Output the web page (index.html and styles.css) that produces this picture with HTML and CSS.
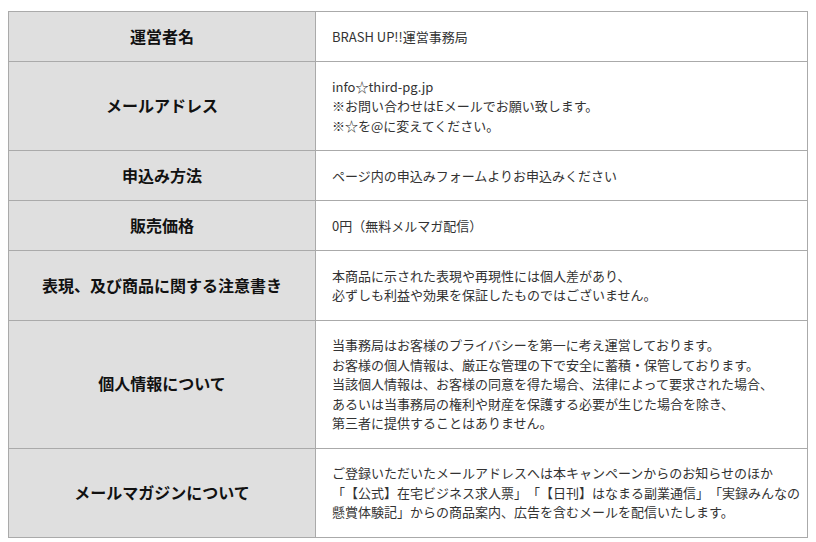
FILE: index.html
```html
<!DOCTYPE html>
<html lang="ja">
<head>
<meta charset="utf-8">
<link rel="stylesheet" href="styles.css">
</head>
<body>
<div class="wrap">
<table class="info">
<tr><th>運営者名</th><td>BRASH UP!!運営事務局</td></tr>
<tr><th>メールアドレス</th><td>info☆third-pg.jp<br>※お問い合わせはEメールでお願い致します。<br>※☆を@に変えてください。</td></tr>
<tr><th>申込み方法</th><td>ページ内の申込みフォームよりお申込みください</td></tr>
<tr><th>販売価格</th><td>0円（無料メルマガ配信）</td></tr>
<tr><th>表現、及び商品に関する注意書き</th><td>本商品に示された表現や再現性には個人差があり、<br>必ずしも利益や効果を保証したものではございません。</td></tr>
<tr><th>個人情報について</th><td>当事務局はお客様のプライバシーを第一に考え運営しております。<br>お客様の個人情報は、厳正な管理の下で安全に蓄積・保管しております。<br>当該個人情報は、お客様の同意を得た場合、法律によって要求された場合、<br>あるいは当事務局の権利や財産を保護する必要が生じた場合を除き、<br>第三者に提供することはありません。</td></tr>
<tr><th>メールマガジンについて</th><td>ご登録いただいたメールアドレスへは本キャンペーンからのお知らせのほか<br>「【公式】在宅ビジネス求人票」「【日刊】はなまる副業通信」「実録みんなの<br>懸賞体験記」からの商品案内、広告を含むメールを配信いたします。</td></tr>
</table>
</div>
</body>
</html>
```
FILE: styles.css
```css
html, body {
  margin: 0;
  padding: 0;
  background: #fff;
}
.wrap {
  padding: 11px 8px;
}
.info {
  width: 800px;
  table-layout: fixed;
  border-collapse: collapse;
  font-family: "Noto Sans CJK JP", "Noto Sans", sans-serif;
  text-spacing-trim: space-all;
}
.info th, .info td {
  border: 1px solid #aaa;
  padding: 14.75px 8px 14.75px 15px;
  line-height: 19.5px;
  vertical-align: middle;
}
.info th {
  width: 307px;
  box-sizing: border-box;
  padding-left: 8px;
  background: #dfdfdf;
  color: #111;
  font-size: 16px;
  font-weight: bold;
  text-align: center;
}
.info td {
  font-size: 13px;
  color: #333;
  text-align: left;
  padding-left: 16px;
  white-space: nowrap;
}
```
